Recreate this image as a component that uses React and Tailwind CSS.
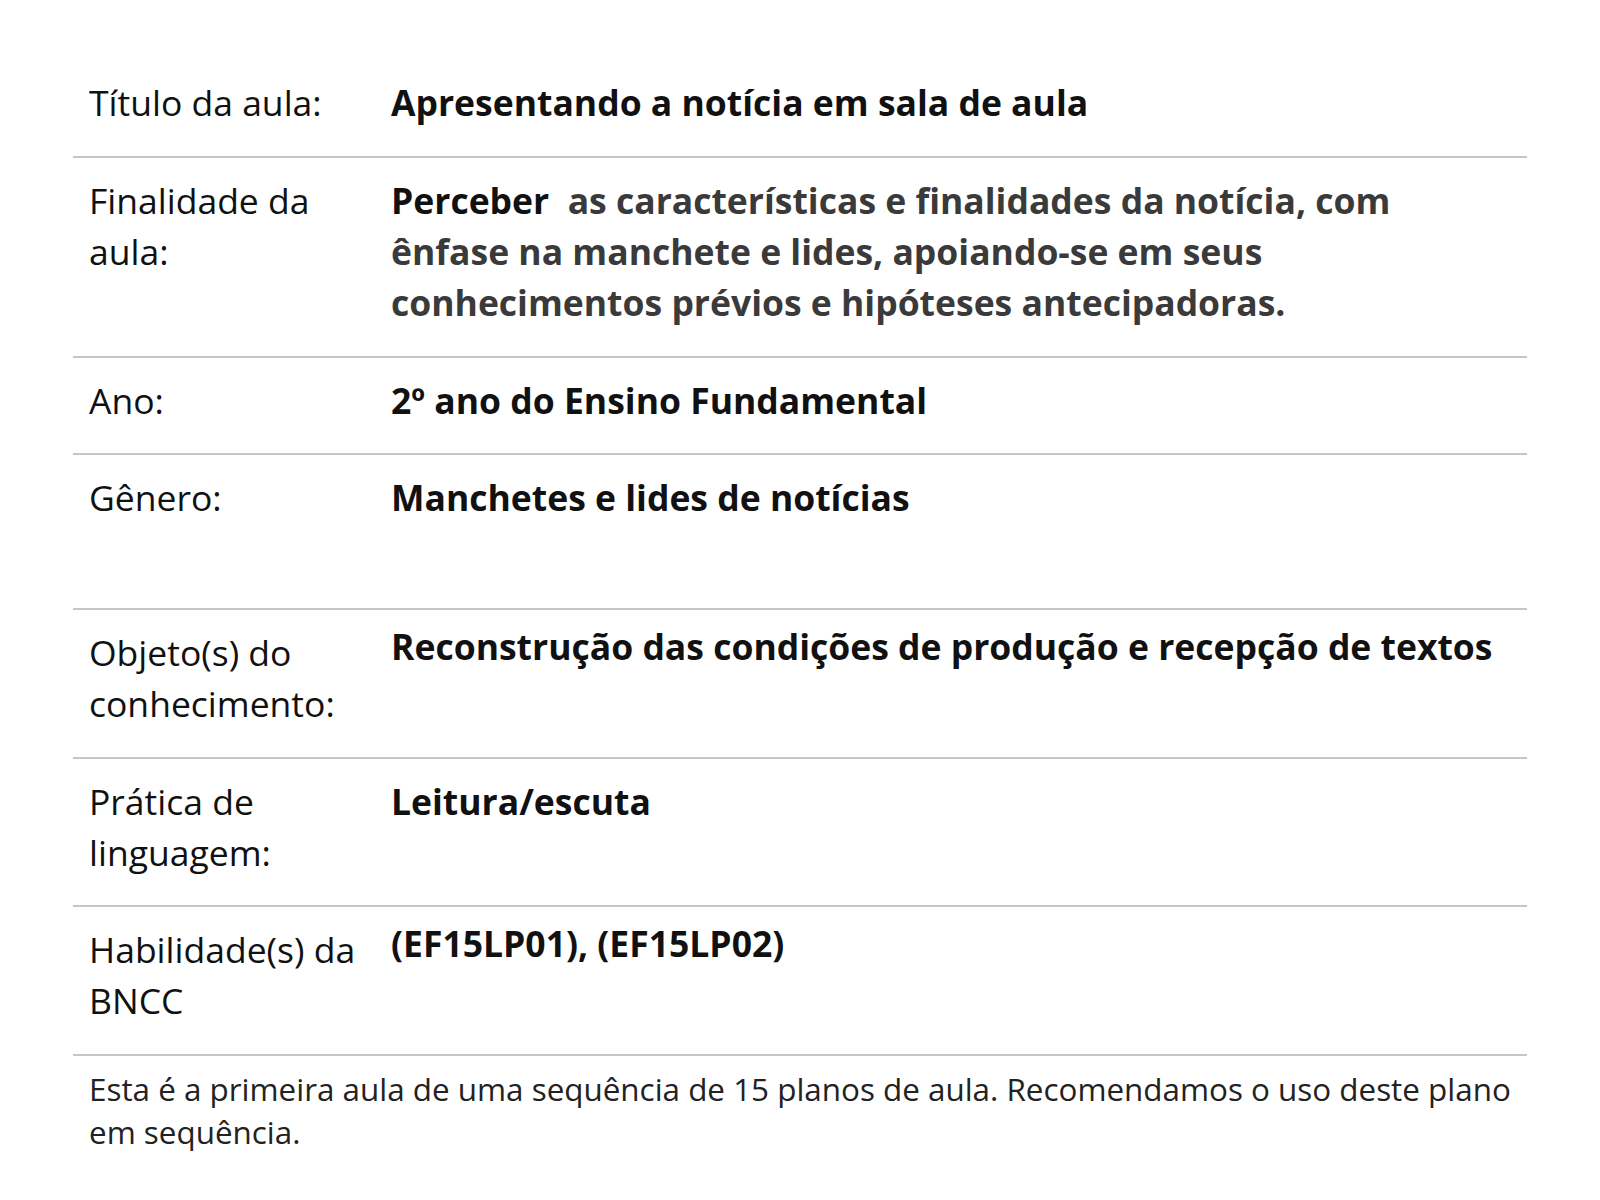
const rows = [
  { label: "Título da aula:", value: "Apresentando a notícia em sala de aula", first: true },
  { label: "Finalidade da aula:", value: "finalidade", tall: true },
  { label: "Ano:", value: "2º ano do Ensino Fundamental" },
  { label: "Gênero:", value: "Manchetes e lides de notícias", extra: true },
  {
    label: "Objeto(s) do conhecimento:",
    value: "Reconstrução das condições de produção e recepção de textos",
    lift: true,
    tall: true,
  },
  { label: "Prática de linguagem:", value: "Leitura/escuta" },
  { label: "Habilidade(s) da BNCC", value: "(EF15LP01), (EF15LP02)", lift: true, tall: true },
];

function Row({ label, value, extra, lift, first, tall }) {
  const pad = first ? "pt-4 pb-7" : tall ? "pt-[17px] pb-[28px]" : "pt-[17px] pb-[27px]";
  return (
    <div className={"flex border-b-2 border-[#c6c6c6] " + pad}>
      <div className="w-[318px] shrink-0 pl-4 pr-4 text-[35.5px] leading-[51px] text-[#111]">{label}</div>
      <div className={"flex-1 text-[35.5px] leading-[51px] font-bold text-[#111] " + (lift ? "-mt-[6px]" : "")}>
        {value === "finalidade" ? (
          <p className="max-w-[1020px]">
            Perceber{"\u00a0 "}
            <span className="text-[#3a3a3a]">
              as características e finalidades da notícia, com ênfase na manchete e lides, apoiando-se em seus conhecimentos prévios e hipóteses antecipadoras.
            </span>
          </p>
        ) : (
          <p>{value}</p>
        )}
        {extra && <div className="h-[58px]" />}
      </div>
    </div>
  );
}

export default function App() {
  return (
    <div className="min-h-screen bg-white" style={{ fontFamily: '"Open Sans", "Liberation Sans", sans-serif' }}>
      <div className="mx-auto w-[1454px] pt-[61px]">
        {rows.map((r) => (
          <Row key={r.label} {...r} />
        ))}
        <p className="pl-4 pt-[11px] text-[31.4px] leading-[43px] text-[#222]">
          Esta é a primeira aula de uma sequência de 15 planos de aula. Recomendamos o uso deste plano em sequência.
        </p>
      </div>
    </div>
  );
}
